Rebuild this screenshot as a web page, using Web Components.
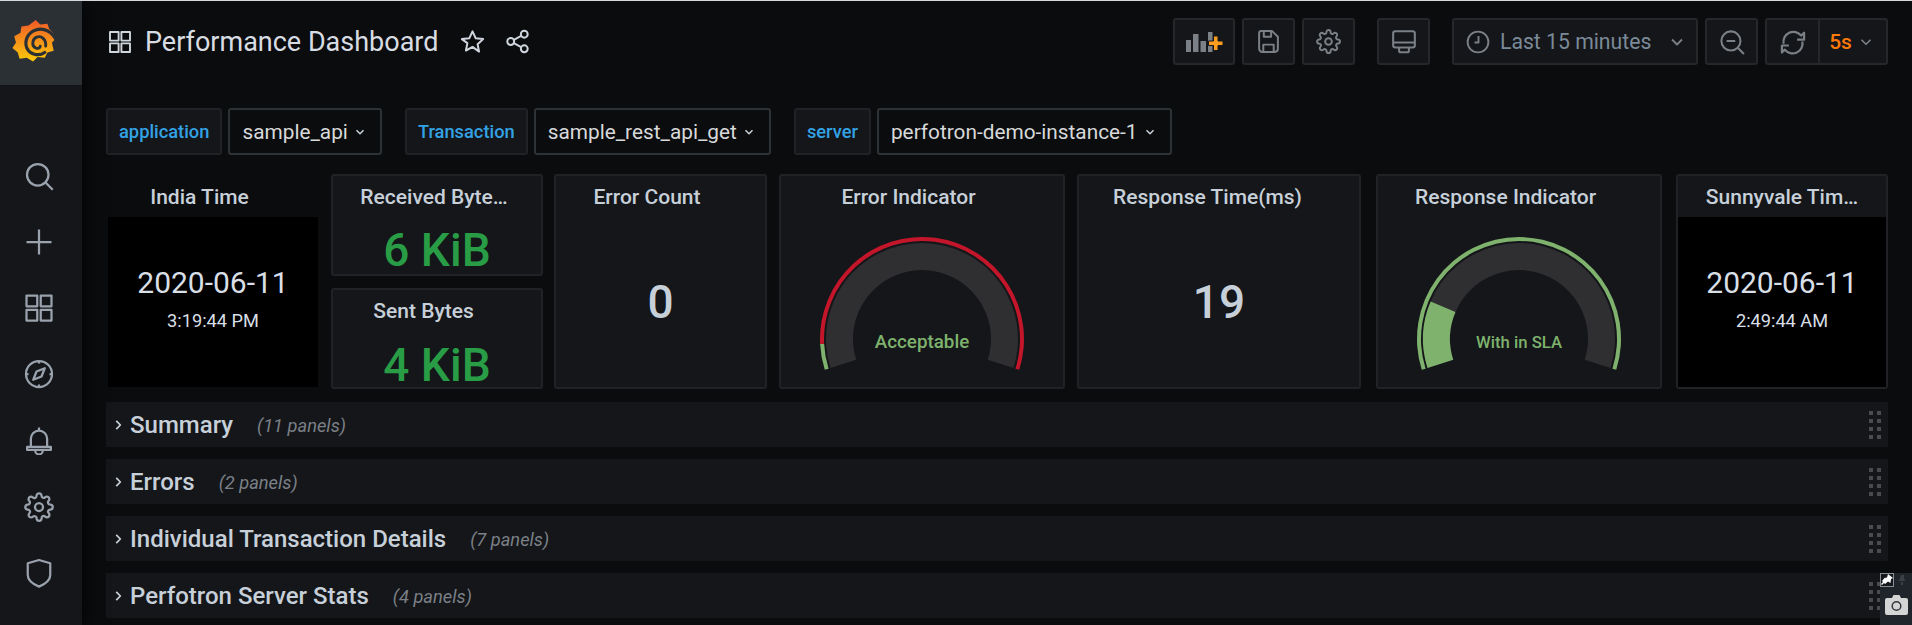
<!DOCTYPE html>
<html>
<head>
<meta charset="utf-8">
<title>Performance Dashboard</title>
<style>
  html, body { margin: 0; height: 100%; overflow: hidden; background: #0b0c0e; }
  body { font-family: Roboto, "Liberation Sans", sans-serif; color: #c7d0d9; }
</style>
</head>
<body>
<gf-app>
  <gf-sidebar slot="side"></gf-sidebar>
  <gf-toolbar title-text="Performance Dashboard"></gf-toolbar>
  <gf-vars>
    <gf-var label="application" value="sample_api"></gf-var>
    <gf-var label="Transaction" value="sample_rest_api_get"></gf-var>
    <gf-var label="server" value="perfotron-demo-instance-1"></gf-var>
  </gf-vars>
  <gf-grid>
    <gf-panel title-text="India Time" plain style="width:214px">
      <gf-clock date="2020-06-11" time="3:19:44 PM"></gf-clock>
    </gf-panel>
    <gf-stack>
      <gf-panel title-text="Received Byte…" style="height:102px;--pad:6px">
        <gf-stat value="6 KiB" color="#299c46" shift="9"></gf-stat>
      </gf-panel>
      <gf-panel title-text="Sent Bytes" style="height:101px">
        <gf-stat value="4 KiB" color="#299c46" shift="11"></gf-stat>
      </gf-panel>
    </gf-stack>
    <gf-panel title-text="Error Count" style="width:213px;margin-left:11px">
      <gf-stat value="0"></gf-stat>
    </gf-panel>
    <gf-panel title-text="Error Indicator" style="width:286px;margin-left:12px">
      <gf-gauge text="Acceptable" size="18.800" fill="-17.6" split="-2.8" low="#7eb26d" high="#c4162a"></gf-gauge>
    </gf-panel>
    <gf-panel title-text="Response Time(ms)" style="width:284px;margin-left:12px;--pad:23px">
      <gf-stat value="19"></gf-stat>
    </gf-panel>
    <gf-panel title-text="Response Indicator" style="width:286px;margin-left:15px">
      <gf-gauge text="With in SLA" size="16.700" fill="23" split="200" low="#7eb26d" high="#7eb26d"></gf-gauge>
    </gf-panel>
    <gf-panel title-text="Sunnyvale Tim…" style="width:212px;margin-left:14px;--pad:0px">
      <gf-clock date="2020-06-11" time="2:49:44 AM" flush></gf-clock>
    </gf-panel>
  </gf-grid>
  <gf-row title-text="Summary" count="(11 panels)"></gf-row>
  <gf-row title-text="Errors" count="(2 panels)"></gf-row>
  <gf-row title-text="Individual Transaction Details" count="(7 panels)"></gf-row>
  <gf-row title-text="Perfotron Server Stats" count="(4 panels)"></gf-row>
  <gf-capture></gf-capture>
</gf-app>

<script>
// stroke icons on a 24 box
const ICONS = {
  search: '<circle cx="11" cy="11" r="8.6"/><path d="M17.2 17.2 23 23"/>',
  plus: '<path d="M12 2v20M2 12h20"/>',
  apps: '<path d="M2 2h8.6v8.6H2zM13.4 2H22v8.6h-8.6zM2 13.4h8.6V22H2zM13.4 13.4H22V22h-8.6z"/>',
  compass: '<circle cx="12" cy="12" r="10.4"/><path d="M16.6 7.4 14 14l-6.6 2.6L10 10z"/><path d="M12 1.6v2M12 20.4v2M1.6 12h2M20.4 12h2" />',
  bell: '<path d="M5.5 17V11a6.5 6.5 0 0 1 13 0v6"/><path d="M2.5 17.5h19v2.4h-19z"/><path d="M9 20.5a3 3 0 0 0 6 0M12 2v2.4"/>',
  gear: '<circle cx="12" cy="12" r="3.2"/><path d="M19.4 15a1.65 1.65 0 0 0 .33 1.82l.06.06a2 2 0 0 1 0 2.83 2 2 0 0 1-2.83 0l-.06-.06a1.65 1.65 0 0 0-1.82-.33 1.65 1.65 0 0 0-1 1.51V21a2 2 0 0 1-2 2 2 2 0 0 1-2-2v-.09A1.65 1.65 0 0 0 9 19.4a1.65 1.65 0 0 0-1.82.33l-.06.06a2 2 0 0 1-2.83 0 2 2 0 0 1 0-2.83l.06-.06a1.65 1.65 0 0 0 .33-1.82 1.65 1.65 0 0 0-1.51-1H3a2 2 0 0 1-2-2 2 2 0 0 1 2-2h.09A1.65 1.65 0 0 0 4.6 9a1.65 1.65 0 0 0-.33-1.82l-.06-.06a2 2 0 0 1 0-2.83 2 2 0 0 1 2.83 0l.06.06a1.65 1.65 0 0 0 1.82.33H9a1.65 1.65 0 0 0 1-1.51V3a2 2 0 0 1 2-2 2 2 0 0 1 2 2v.09a1.65 1.65 0 0 0 1 1.51 1.65 1.65 0 0 0 1.82-.33l.06-.06a2 2 0 0 1 2.83 0 2 2 0 0 1 0 2.83l-.06.06a1.65 1.65 0 0 0-.33 1.82V9a1.65 1.65 0 0 0 1.51 1H21a2 2 0 0 1 2 2 2 2 0 0 1-2 2h-.09a1.65 1.65 0 0 0-1.51 1z"/>',
  shield: '<path d="M3 4.2 12 1.6l9 2.6v9.3c0 4-4 7.2-9 9.4-5-2.2-9-5.4-9-9.4z"/>',
  star: '<path d="M12 2.2l3 6.6 7.2.9-5.3 4.9 1.4 7.1L12 17.2l-6.3 3.5 1.4-7.1L1.800 9.700 9 8.800z"/>',
  share: '<circle cx="18.500" cy="5" r="3.300"/><circle cx="5.500" cy="12" r="3.300"/><circle cx="18.500" cy="19" r="3.300"/><path d="M8.500 10.400l7-3.800M8.500 13.600l7 3.800"/>',
  save: '<path d="M5 2h10.500L21 7.500V19a3 3 0 0 1-3 3H6a3 3 0 0 1-3-3V4a2 2 0 0 1 2-2z"/><path d="M7.500 2v5.500h7V2M7 22v-7h10v7"/>',
  monitor: '<rect x="2" y="2" width="20" height="15" rx="2"/><path d="M2 12.500h20M7.500 17v3a1.500 1.500 0 0 0 1.500 1.500h6a1.500 1.500 0 0 0 1.500-1.500v-3"/>',
  clock: '<circle cx="12" cy="12" r="10.400"/><path d="M12.500 6v6.500H8.500"/>',
  zoomout: '<circle cx="11" cy="11" r="8.800"/><path d="M17.300 17.300 23 23M7 11h8"/>',
  sync: '<path d="M4 13.500A8.500 8.500 0 0 1 19 6.500L21.500 4v6h-6"/><path d="M20 10.500A8.500 8.500 0 0 1 5 17.500L2.500 20v-6h6" transform="translate(0 1)"/>',
  chevron: '<path d="M6 9l6 6 6-6"/>',
  right: '<path d="M9 5l7 7-7 7"/>'
};

class GfIcon extends HTMLElement {
  connectedCallback() {
    const size = this.getAttribute('size') || 24;
    const sw = this.getAttribute('sw') || 1.9;
    this.attachShadow({ mode: 'open' }).innerHTML = `
      <style>:host { display: inline-flex; flex: none; } svg { display: block; fill: none; stroke: currentColor; stroke-linejoin: round; }</style>
      <svg width="${size}" height="${size}" viewBox="0 0 24 24" stroke-width="${sw}">${ICONS[this.getAttribute('name')]}</svg>`;
  }
}
customElements.define('gf-icon', GfIcon);

class GfApp extends HTMLElement {
  constructor() {
    super();
    this.attachShadow({ mode: 'open' }).innerHTML = `
      <style>
        :host { display: flex; height: 625px; box-sizing: border-box; border-top: 1px solid #d8d9da; position: relative; overflow: hidden; }
        main { flex: 1; min-width: 0; padding: 17px 24px 0; display: flex; flex-direction: column; }
        ::slotted(*) { flex: none; }
      </style>
      <slot name="side"></slot>
      <main><slot></slot></main>`;
  }
}
customElements.define('gf-app', GfApp);

class GfSidebar extends HTMLElement {
  constructor() {
    super();
    const items = ['search', 'plus', 'apps', 'compass', 'bell', 'gear', 'shield'];
    this.attachShadow({ mode: 'open' }).innerHTML = `
      <style>
        :host { display: flex; flex-direction: column; width: 82px; flex: none; background: #141619; box-shadow: 0 0 20px rgba(0,0,0,.9); color: #9aa2ad; z-index: 1; }
        .logo { height: 84px; background: #2b3035; display: flex; }
        .logo svg { display: block; }
        nav { margin-top: 58px; display: flex; flex-direction: column; }
        nav div { height: 66.1px; display: flex; align-items: center; justify-content: center; padding-right: 4px; }
      </style>
      <div class="logo">
        <svg width="82" height="84" viewBox="0 0 84 86">
          <defs><linearGradient id="g" x1="0" y1="0" x2="0" y2="1"><stop offset="0" stop-color="#f05a28"/><stop offset="1" stop-color="#fbca0a"/></linearGradient></defs>
          <g transform="translate(3.500 3) scale(.92)">
            <path fill="url(#g)" d="M36 18l5 5 8-1 2 6 5 5 1 7-3 3 2 9-7 2-3 6-8-1-5 5-7-4-8 1-2-7-6-5 4-6-2-7 7-4 1-7 8-1z"/>
            <path fill="none" stroke="#2b3035" stroke-width="3.600" stroke-linecap="round" d="M59 41C55 31 45 26 36 29 27 32 23 41 26 49 29 56 39 59 46 54"/>
            <path fill="none" stroke="#2b3035" stroke-width="3.200" stroke-linecap="round" d="M47 47C48 39 42 35 37 37 32 39 31 47 36 49 38 50 41 49 41 47"/>
          </g>
        </svg>
      </div>
      <nav>${items.map(n => `<div><gf-icon name="${n}" size="30" sw="1.800"></gf-icon></div>`).join('')}</nav>`;
  }
}
customElements.define('gf-sidebar', GfSidebar);

class GfToolbar extends HTMLElement {
  connectedCallback() {
    this.attachShadow({ mode: 'open' }).innerHTML = `
      <style>
        :host { display: flex; align-items: center; height: 47px; margin-bottom: 43px; }
        .name { display: flex; align-items: center; margin-left: 2px; color: #d0d6dd; }
        h1 { font: 400 27px Roboto, sans-serif; margin: 0 22px 0 13px; color: #d8dde3; white-space: nowrap; }
        .tools { margin-left: auto; display: flex; align-items: stretch; height: 47px; }
        .btn { display: flex; align-items: center; justify-content: center; width: 53px; box-sizing: border-box; background: #141619; border: 2px solid #25272b; border-radius: 3px; margin-left: 7px; color: #7b8087; }
        .btn.add { width: 62px; margin-left: 0; }
        .btn.far { margin-left: 22px; }
        .time { width: 246px; margin-left: 22px; justify-content: flex-start; padding-left: 12px; font-size: 21.200px; }
        .time span { margin-left: 10px; color: #7b8a98; }
        .time gf-icon:last-child { margin-left: auto; margin-right: 9px; }
        .refresh { width: 123px; padding: 0; }
        .refresh > div { display: flex; align-items: center; justify-content: center; height: 100%; }
        .refresh .a { width: 51px; border-right: 2px solid #25272b; }
        .refresh .b { flex: 1; color: #ff780a; font-size: 21px; font-weight: 500; padding-right: 2px; }
        .refresh .b gf-icon { color: #7b8087; margin-left: 5px; }
        .bars { display: block; }
      </style>
      <div class="name">
        <gf-icon name="apps" size="24" sw="1.900"></gf-icon>
        <h1>${this.getAttribute('title-text')}</h1>
        <gf-icon name="star" size="25" sw="1.900"></gf-icon>
        <gf-icon name="share" size="25" sw="1.900" style="margin-left:20px"></gf-icon>
      </div>
      <div class="tools">
        <div class="btn add">
          <svg class="bars" width="38" height="22" viewBox="0 0 38 22">
            <path fill="#7b8087" d="M1 9h5v12H1zM8 3h5.500v18H8zM15.500 10H21v11h-5.500zM23 1h4.500v20H23z"/>
            <path fill="#ff9d1e" stroke="#141619" d="M28.500 5h4.500v5h5v4.500h-5v5h-4.500v-5h-5V10h5z"/>
          </svg>
        </div>
        <div class="btn"><gf-icon name="save" size="25"></gf-icon></div>
        <div class="btn"><gf-icon name="gear" size="25"></gf-icon></div>
        <div class="btn far"><gf-icon name="monitor" size="26"></gf-icon></div>
        <div class="btn time"><gf-icon name="clock" size="24"></gf-icon><span>Last 15 minutes</span><gf-icon name="chevron" size="20" sw="2.200"></gf-icon></div>
        <div class="btn"><gf-icon name="zoomout" size="26"></gf-icon></div>
        <div class="btn refresh">
          <div class="a"><gf-icon name="sync" size="28"></gf-icon></div>
          <div class="b">5s<gf-icon name="chevron" size="18" sw="2.200"></gf-icon></div>
        </div>
      </div>`;
  }
}
customElements.define('gf-toolbar', GfToolbar);

class GfVars extends HTMLElement {
  constructor() {
    super();
    this.attachShadow({ mode: 'open' }).innerHTML = `
      <style>:host { display: flex; gap: 23px; height: 47px; margin-bottom: 19px; }</style><slot></slot>`;
  }
}
customElements.define('gf-vars', GfVars);

class GfVar extends HTMLElement {
  connectedCallback() {
    this.attachShadow({ mode: 'open' }).innerHTML = `
      <style>
        :host { display: flex; gap: 6px; }
        div { display: flex; align-items: center; box-sizing: border-box; border-radius: 3px; white-space: nowrap; }
        .l { background: #141619; border: 2px solid #202226; color: #33a2e5; font-weight: 500; padding: 0 11px; font-size: 18.300px; }
        .v { background: #0b0c0e; border: 2px solid #2c3235; color: #d8d9da; padding: 0 13px 0 12px; font-size: 20.800px; }
        gf-icon { margin-left: 5px; color: #c7d0d9; }
      </style>
      <div class="l">${this.getAttribute('label')}</div>
      <div class="v">${this.getAttribute('value')}<gf-icon name="chevron" size="14" sw="2.600"></gf-icon></div>`;
  }
}
customElements.define('gf-var', GfVar);

class GfGrid extends HTMLElement {
  constructor() {
    super();
    this.attachShadow({ mode: 'open' }).innerHTML = `
      <style>:host { display: flex; height: 215px; margin-bottom: 13px; }</style><slot></slot>`;
  }
}
customElements.define('gf-grid', GfGrid);

class GfStack extends HTMLElement {
  constructor() {
    super();
    this.attachShadow({ mode: 'open' }).innerHTML = `
      <style>:host { display: flex; flex-direction: column; justify-content: space-between; width: 213px; margin-left: 11px; }</style><slot></slot>`;
  }
}
customElements.define('gf-stack', GfStack);

class GfPanel extends HTMLElement {
  connectedCallback() {
    this.attachShadow({ mode: 'open' }).innerHTML = `
      <style>
        :host { display: flex; flex-direction: column; box-sizing: border-box; background: #141619; border: 2px solid #202226; border-radius: 3px; flex: none; }
        :host([plain]) { background: none; border-color: transparent; }
        header { height: 41px; flex: none; display: flex; align-items: center; justify-content: center; padding-right: var(--pad, 27px); font-size: 21px; font-weight: 500; color: #c7d0d9; white-space: nowrap; }
        section { flex: 1; min-height: 0; display: flex; }
      </style>
      <header>${this.getAttribute('title-text')}</header>
      <section><slot></slot></section>`;
  }
}
customElements.define('gf-panel', GfPanel);

class GfClock extends HTMLElement {
  connectedCallback() {
    this.attachShadow({ mode: 'open' }).innerHTML = `
      <style>
        :host { flex: 1; display: flex; flex-direction: column; align-items: center; justify-content: center; background: #000; color: #d8dfe6; padding-bottom: 9px; }
        .d { font-size: 30px; line-height: 36px; }
        .t { font-size: 18.200px; line-height: 20px; margin-top: 10px; }
      </style>
      <div class="d">${this.getAttribute('date')}</div>
      <div class="t">${this.getAttribute('time')}</div>`;
  }
}
customElements.define('gf-clock', GfClock);

class GfStat extends HTMLElement {
  connectedCallback() {
    const color = this.getAttribute('color') || '#c7d0d9';
    const shift = this.getAttribute('shift') || 0;
    this.attachShadow({ mode: 'open' }).innerHTML = `
      <style>
        :host { flex: 1; display: flex; align-items: center; justify-content: center; padding-top: ${shift}px; }
        div { font-size: 46px; line-height: 40px; font-weight: 500; color: ${color}; white-space: nowrap; }
      </style>
      <div>${this.getAttribute('value')}</div>`;
  }
}
customElements.define('gf-stat', GfStat);

class GfGauge extends HTMLElement {
  // angles in degrees above the horizontal on the left, the dial runs from -17.6 round to 197.6
  arc(r0, r1, a0, a1, color) {
    const pt = (r, a) => {
      const t = a * Math.PI / 180;
      return [(141 - r * Math.cos(t)).toFixed(2), (122 - r * Math.sin(t)).toFixed(2)];
    };
    const large = a1 - a0 > 180 ? 1 : 0;
    const [x0, y0] = pt(r1, a0), [x1, y1] = pt(r1, a1), [x2, y2] = pt(r0, a1), [x3, y3] = pt(r0, a0);
    return `<path fill="${color}" d="M${x0} ${y0}A${r1} ${r1} 0 ${large} 1 ${x1} ${y1}L${x2} ${y2}A${r0} ${r0} 0 ${large} 0 ${x3} ${y3}Z"/>`;
  }
  connectedCallback() {
    const START = -17.6, END = 197.6;
    const fill = +this.getAttribute('fill');
    const split = Math.min(+this.getAttribute('split'), END);
    const low = this.getAttribute('low'), high = this.getAttribute('high');
    let arcs = this.arc(69, 96, START, END, '#2f2f32');
    if (fill > START) arcs += this.arc(69, 96, START, fill, low);
    arcs += this.arc(98, 102, START, split, low);
    if (split < END) arcs += this.arc(98, 102, split, END, high);
    this.attachShadow({ mode: 'open' }).innerHTML = `
      <style>
        :host { flex: 1; display: block; }
        svg { display: block; }
        text { font: 500 ${this.getAttribute('size')}px Roboto, sans-serif; fill: #7eb26d; text-anchor: middle; }
      </style>
      <svg width="282" height="170" viewBox="0 0 282 170">${arcs}<text x="141" y="131">${this.getAttribute('text')}</text></svg>`;
  }
}
customElements.define('gf-gauge', GfGauge);

class GfRow extends HTMLElement {
  connectedCallback() {
    this.attachShadow({ mode: 'open' }).innerHTML = `
      <style>
        :host { display: flex; align-items: center; height: 45px; margin-bottom: 12px; background: #141619; color: #c7d0d9; position: relative; padding-left: 5px; }
        b { font-size: 24px; font-weight: 500; margin-left: 5px; color: #c7d0d9; }
        i { font-size: 18.300px; color: #7b8087; margin-left: 24px; padding-top: 2px; }
        .grab { position: absolute; right: 7px; top: 9px; display: grid; grid-template-columns: 4px 4px; grid-auto-rows: 4px; gap: 4px; }
        .grab span { background: #4a4b4d; }
      </style>
      <gf-icon name="right" size="14" sw="3"></gf-icon>
      <b>${this.getAttribute('title-text')}</b>
      <i>${this.getAttribute('count')}</i>
      <div class="grab">${'<span></span>'.repeat(8)}</div>`;
  }
}
customElements.define('gf-row', GfRow);

// the little screen capture widget that floats over the bottom right corner
class GfCapture extends HTMLElement {
  constructor() {
    super();
    this.attachShadow({ mode: 'open' }).innerHTML = `
      <style>
        :host { position: absolute; right: 0; bottom: 0; width: 32px; height: 52px; background: #20252b; }
        .pin { position: absolute; left: 0; top: 0; width: 14px; height: 14px; box-sizing: border-box; border: 1px solid #8a8d91; background: #15181c; }
        svg { position: absolute; display: block; }
      </style>
      <svg style="left:16px;top:1px" width="12" height="12" viewBox="0 0 12 12"><path fill="#3a4046" d="M5 1h3v4l2 2H2l2-2zM5 8h2v3H5z"/></svg>
      <div class="pin"></div>
      <svg style="left:1px;top:1px" width="12" height="12" viewBox="0 0 12 12"><path fill="#fff" d="M7 0l5 4-2 1-.5 4-2.500-1.500L4 10 3 9 1 11 0 10l2-2-1-1 2.500-3L6 3.500z"/></svg>
      <svg style="left:5px;top:22px" width="23" height="20" viewBox="0 0 23 20">
        <path fill="#d4d4d4" d="M2 3h5l1.500-3h6L16 3h5a2 2 0 0 1 2 2v13a2 2 0 0 1-2 2H2a2 2 0 0 1-2-2V5a2 2 0 0 1 2-2z"/>
        <circle cx="11.500" cy="11" r="4.300" fill="none" stroke="#33373b" stroke-width="1.500"/>
      </svg>`;
  }
}
customElements.define('gf-capture', GfCapture);
</script>
</body>
</html>
